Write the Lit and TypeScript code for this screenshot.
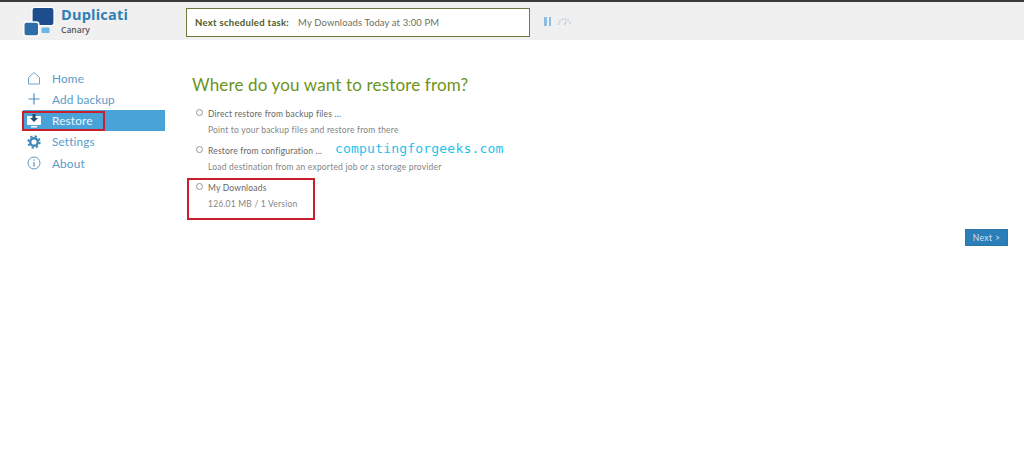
import { LitElement, html, css } from "lit";
import { customElement } from "lit/decorators.js";

@customElement("app-root")
export class AppRoot extends LitElement {
  static styles = css`
    :host { display: block; position: relative; height: 475px; background: #fff; overflow: hidden; font-family: Lato, "Open Sans", sans-serif; color: #5a5a5a; }
    .top { height: 2px; background: #3a3a3a; }
    header { height: 38px; background: #f0f0f0; display: flex; align-items: flex-start; }
    .logo { width: 38px; height: 36px; flex: none; margin-left: 23px; margin-top: 3px; }
    .brand { margin-left: 0; width: 125px; flex: none; }
    .name { font-size: 14.500px; font-weight: 700; color: #2f7fb5; line-height: 18px; margin-top: 4px; letter-spacing: .2px; font-family: "Open Sans", sans-serif; }
    .canary { font-size: 8.500px; font-weight: 600; color: #555; line-height: 10px; margin-top: 1px; font-family: "Open Sans", sans-serif; }
    .task { box-sizing: border-box; margin-top: 6px; width: 344px; height: 29px; border: 1px solid #6f7a3c; background: #fff; display: flex; align-items: center; padding-left: 8px; font-size: 9.500px; color: #6f6f62; letter-spacing: .1px; }
    .task b { color: #4d5a25; margin-right: 9px; font-weight: 700; letter-spacing: .3px; }
    .status { display: flex; align-items: center; margin: 15px 0 0 14px; gap: 6px; }
    .pause { display: flex; gap: 2px; }
    .pause i { display: block; width: 2.500px; height: 9px; background: #8fbde0; }
    .body { display: flex; }
    nav { width: 142px; margin: 27.500px 0 0 23px; flex: none; }
    .item { height: 21.250px; display: flex; align-items: center; font-size: 11.800px; color: #5b9ac6; letter-spacing: .15px; }
    .item svg { width: 16px; height: 16px; margin-left: 3px; margin-right: 10px; flex: none; }
    .item.on { background: #4aa3d8; color: #eaf5fb; }
    main { margin-left: 27px; flex: 1; padding-top: 33px; }
    h1 { margin: 0 0 12px; font-size: 17px; line-height: 24px; font-weight: 400; color: #6b9420; letter-spacing: .15px; }
    .opt { position: relative; padding-left: 16px; font-size: 8.500px; line-height: 10px; height: 37px; color: #666; letter-spacing: .2px; }
    .opt .sub { color: #858585; margin-top: 6px; }
    .opt .radio { position: absolute; left: 4px; top: 0; box-sizing: border-box; width: 7px; height: 7px; border-radius: 50%; border: 1px solid #999; background: #fff; }
    .actions { display: flex; justify-content: flex-end; margin: 9px 16px 0 0; }
    .next { box-sizing: border-box; width: 43px; height: 17px; background: #2a7fb8; border: 1px solid #2a76a8; color: #cfe6f5; font: 8.500px Lato, sans-serif; padding: 0; letter-spacing: .4px; }
    .red { position: absolute; box-sizing: border-box; border: 2px solid #c8202c; }
    .r1 { left: 22px; top: 111px; width: 83px; height: 20px; }
    .r2 { left: 187px; top: 178px; width: 128px; height: 42px; }
    .mark { position: absolute; left: 335px; top: 140px; font: 13px/18px "DejaVu Sans Mono", monospace; color: #19c3ee; letter-spacing: .2px; }
  `;

  render() {
    return html`
      <div class="top"></div>
      <header>
        <svg class="logo" viewBox="0 0 38 36">
          <rect x="9" y="2.500" width="22" height="18" rx="2.500" fill="#1d4d8c" stroke="#fff" stroke-width="1.200"/>
          <rect x="0.800" y="17" width="15" height="14" rx="2.500" fill="#2f6da8" stroke="#fff" stroke-width="1.500"/>
          <rect x="18.500" y="22.500" width="8" height="5.500" rx="1" fill="#6ab8e8"/>
        </svg>
        <div class="brand"><div class="name">Duplicati</div><div class="canary">Canary</div></div>
        <div class="task"><b>Next scheduled task:</b> My Downloads Today at 3:00 PM</div>
        <div class="status">
          <div class="pause"><i></i><i></i></div>
          <svg width="15" height="9" viewBox="0 0 15 9" fill="none" stroke="#c0ccd6" stroke-width="1.400" stroke-dasharray="2 1"><path d="M1.500 8a6 6 0 0 1 12 0"/><path d="M7.500 8 9 4" stroke-dasharray="none"/></svg>
        </div>
      </header>
      <div class="body">
        <nav>
          <div class="item"><svg viewBox="0 0 16 16" fill="none" stroke="#6aa3cc"><path d="M2.500 7.500 8 2.500l5.500 5V14h-11z"/></svg>Home</div>
          <div class="item"><svg viewBox="0 0 16 16" fill="none" stroke="#4a8fbf" stroke-width="1.200"><path d="M8 2.500v11M2.500 8h11"/></svg>Add backup</div>
          <div class="item on"><svg viewBox="0 0 16 16"><rect x="1" y="3" width="14" height="9" rx="1" fill="#fff"/><rect x="5" y="13" width="6" height="1.500" fill="#fff"/><path d="M6.500 1h3v4H12L8 9 4 5h2.500z" fill="#1d4d70"/></svg>Restore</div>
          <div class="item"><svg viewBox="0 0 16 16"><circle cx="8" cy="8" r="3.800" fill="none" stroke="#3f87b8" stroke-width="2.400"/><circle cx="8" cy="8" r="5.800" fill="none" stroke="#3f87b8" stroke-width="1.800" stroke-dasharray="2.300 2.250"/></svg>Settings</div>
          <div class="item"><svg viewBox="0 0 16 16" fill="none" stroke="#5b9ac6"><circle cx="8" cy="8" r="6"/><path d="M8 7v4.500M8 4.500v1.200" stroke-width="1.300"/></svg>About</div>
        </nav>
        <main>
          <h1>Where do you want to restore from?</h1>
          <div class="opt"><span class="radio"></span>Direct restore from backup files ...<div class="sub">Point to your backup files and restore from there</div></div>
          <div class="opt"><span class="radio"></span>Restore from configuration ...<div class="sub">Load destination from an exported job or a storage provider</div></div>
          <div class="opt"><span class="radio"></span>My Downloads<div class="sub">126.01 MB / 1 Version</div></div>
          <div class="actions"><button class="next">Next &gt;</button></div>
        </main>
      </div>
      <div class="red r1"></div>
      <div class="red r2"></div>
      <div class="mark">computingforgeeks.com</div>
    `;
  }
}
